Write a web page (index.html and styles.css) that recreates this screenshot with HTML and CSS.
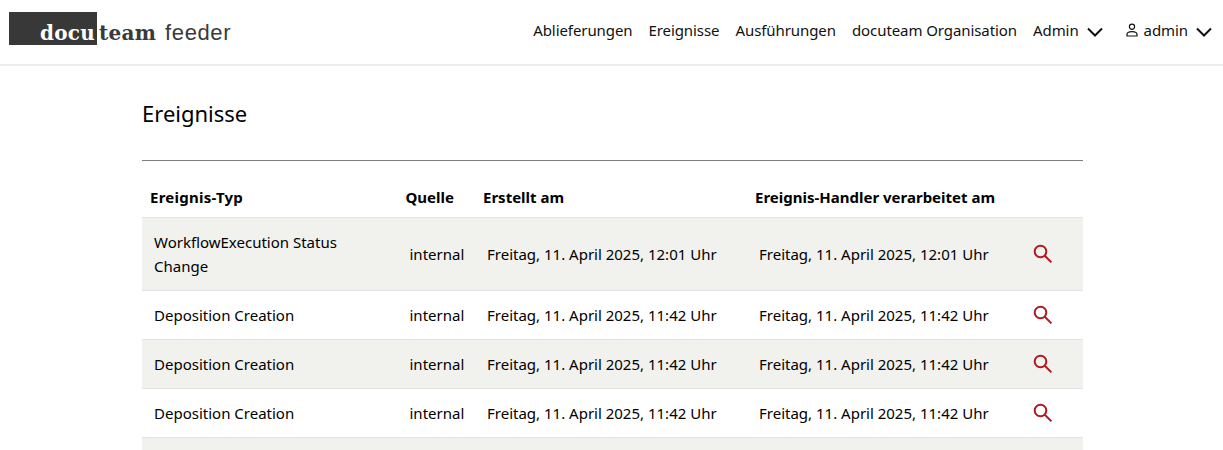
FILE: index.html
```html
<!DOCTYPE html>
<html lang="de">
<head>
<meta charset="utf-8">
<title>Ereignisse</title>
<link rel="stylesheet" href="styles.css">
</head>
<body>
<header class="navbar">
  <a class="logo"><span class="logo-box"><span class="logo-docu">docu</span></span><span class="logo-team">team</span><span class="logo-feeder">feeder</span></a>
  <nav class="nav">
    <a>Ablieferungen</a>
    <a>Ereignisse</a>
    <a>Ausführungen</a>
    <a>docuteam Organisation</a>
    <a class="drop">Admin <svg class="chev" viewBox="0 0 16 10"><path d="M1 1.5l7 7 7-7"/></svg></a>
    <a class="drop"><svg class="user" viewBox="0 0 12 14"><circle cx="6" cy="3.7" r="2.6"/><path d="M1 13v-1.5C1 9.5 3 8.6 6 8.6s5 .9 5 2.9V13z"/></svg>admin <svg class="chev" viewBox="0 0 16 10"><path d="M1 1.5l7 7 7-7"/></svg></a>
  </nav>
</header>
<main class="main">
  <h1 class="title">Ereignisse</h1>
  <hr class="rule">
  <table class="events">
    <colgroup><col class="c1"><col class="c2"><col class="c3"><col class="c4"><col></colgroup>
    <thead>
      <tr><th class="th-first">Ereignis-Typ</th><th>Quelle</th><th>Erstellt am</th><th>Ereignis-Handler verarbeitet am</th><th></th></tr>
    </thead>
    <tbody>
      <tr><td>WorkflowExecution Status Change</td><td>internal</td><td>Freitag, 11. April 2025, 12:01 Uhr</td><td>Freitag, 11. April 2025, 12:01 Uhr</td><td><svg class="lens" viewBox="0 0 20 20"><circle cx="7.5" cy="7.5" r="5.8"/><path d="M11.8 11.8l6.6 6.6"/></svg></td></tr>
      <tr><td>Deposition Creation</td><td>internal</td><td>Freitag, 11. April 2025, 11:42 Uhr</td><td>Freitag, 11. April 2025, 11:42 Uhr</td><td><svg class="lens" viewBox="0 0 20 20"><circle cx="7.5" cy="7.5" r="5.8"/><path d="M11.8 11.8l6.6 6.6"/></svg></td></tr>
      <tr><td>Deposition Creation</td><td>internal</td><td>Freitag, 11. April 2025, 11:42 Uhr</td><td>Freitag, 11. April 2025, 11:42 Uhr</td><td><svg class="lens" viewBox="0 0 20 20"><circle cx="7.5" cy="7.5" r="5.8"/><path d="M11.8 11.8l6.6 6.6"/></svg></td></tr>
      <tr><td>Deposition Creation</td><td>internal</td><td>Freitag, 11. April 2025, 11:42 Uhr</td><td>Freitag, 11. April 2025, 11:42 Uhr</td><td><svg class="lens" viewBox="0 0 20 20"><circle cx="7.5" cy="7.5" r="5.8"/><path d="M11.8 11.8l6.6 6.6"/></svg></td></tr>
      <tr class="row-empty"><td></td><td></td><td></td><td></td><td></td></tr>
    </tbody>
  </table>
</main>
</body>
</html>
```

FILE: styles.css
```css
* { box-sizing: border-box; }
html, body { height: 450px; overflow: hidden; }
body {
  margin: 0;
  background: #fff;
  color: #000;
  font-family: "Noto Sans", "Open Sans", sans-serif;
  font-size: 15px;
  line-height: 24px;
}
.navbar {
  height: 66px;
  display: flex;
  justify-content: space-between;
  align-items: flex-start;
  padding: 12px 11px 0 9px;
  background: #fff;
  border-bottom: 2px solid #ececec;
}
.logo { display: flex; align-items: flex-end; height: 33px; color: #3a3a3a; }
.logo-box {
  width: 88px;
  height: 33px;
  background: #383838;
  display: flex;
  justify-content: flex-end;
  align-items: flex-end;
}
.logo-docu, .logo-team {
  font-family: "DejaVu Serif", serif;
  font-weight: 700;
  font-size: 20px;
  line-height: 24px;
  letter-spacing: .25px;
}
.logo-docu { color: #fff; width: 57px; }
.logo-team { margin-left: 2px; }
.logo-feeder {
  font-family: "Liberation Sans", sans-serif;
  font-size: 22px;
  line-height: 25px;
  margin-left: 9px;
  letter-spacing: .6px;
}
.nav { display: flex; gap: 16px; align-items: center; height: 36px; color: #111; letter-spacing: -.08px; }
.drop { display: flex; align-items: center; }
.chev { width: 16px; height: 10px; margin-left: 8px; margin-top: 3px; fill: none; stroke: #111; stroke-width: 2; }
.user { width: 12px; height: 14px; margin: 0 6px 0 0; fill: none; stroke: #111; stroke-width: 1.2; }
.drop + .drop { margin-left: 7px; }
.main { width: 941px; margin-left: 142px; }
.title { margin: 29px 0 0; font-size: 22px; line-height: 36px; font-weight: 400; }
.rule { margin: 29px 0 0; border: 0; border-top: 1px solid #7d7d7d; }
.events { width: 941px; table-layout: fixed; border-collapse: collapse; margin-top: 19px; }
.c1 { width: 255.5px; }
.c2 { width: 77.5px; }
.c3 { width: 272px; }
.c4 { width: 274px; }
th {
  text-align: left;
  font-weight: 700;
  padding: 5px 0 8px 8px;
  height: 36px;
  white-space: nowrap;
}
.th-first { letter-spacing: .25px; }
td {
  padding: 12px;
  vertical-align: middle;
  border-top: 1px solid #e3e3e3;
  white-space: nowrap;
}
td:first-child { white-space: normal; }
tbody tr:nth-child(odd) { background: #f1f1ee; }
.row-empty td { height: 49px; }
.lens { display: block; width: 20px; height: 20px; fill: none; stroke: #b4171f; stroke-width: 2; }
```
